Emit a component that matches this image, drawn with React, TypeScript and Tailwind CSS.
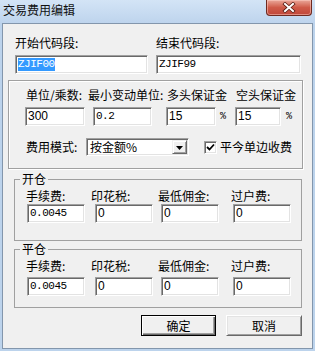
import React from "react";

const cx = (...classes: Array<string | false | null | undefined>) =>
  classes.filter(Boolean).join(" ");

// classic sunken edit box
const Field = ({
  value,
  className,
  mono,
  selected,
}: {
  value: string;
  className: string;
  mono?: boolean;
  selected?: boolean;
}) => (
  <div
    className={cx(
      "flex h-[19px] shrink-0 items-center border border-t-[#a0a0a0] border-l-[#a0a0a0] border-b-white border-r-white bg-white pl-[2px] shadow-[inset_1px_1px_0_#696969,inset_-1px_-1px_0_#e3e3e3]",
      className,
    )}
  >
    {mono ? (
      <span
        className={cx(
          "font-['Liberation_Mono',monospace] text-[11px] leading-[13px] tracking-[-0.5px]",
          selected && "bg-[#3399ff] text-white",
        )}
      >
        {value}
      </span>
    ) : (
      <span className="font-['Liberation_Sans',sans-serif] text-[12px] leading-[13px]">
        {value}
      </span>
    )}
  </div>
);

const Percent = ({ className }: { className: string }) => (
  <span
    className={cx(
      "font-['Liberation_Mono',monospace] text-[10px] leading-[16px]",
      className,
    )}
  >
    %
  </span>
);

const FeeGroup = ({
  title,
  className,
  values,
}: {
  title: string;
  className: string;
  values: Array<{ v: string; mono?: boolean }>;
}) => (
  <fieldset
    className={cx(
      "ml-[11px] w-[288px] shrink-0 border border-[#a0a0a0]",
      className,
    )}
  >
    <legend className="ml-[5px] px-[2px] leading-[16px]">{title}</legend>
    <div className="mt-[1px] flex pl-[11px] leading-[16px]">
      <span className="w-[65px]">手续费:</span>
      <span className="w-[67px]">印花税:</span>
      <span className="w-[73px]">最低佣金:</span>
      <span>过户费:</span>
    </div>
    <div className={cx("flex items-center pl-[12px]", title === "平仓" ? "mt-[3px]" : "mt-0")}>
      <Field value={values[0].v} mono={values[0].mono} className="w-[58px]" />
      <Field value={values[1].v} mono={values[1].mono} className="ml-[10px] w-[58px]" />
      <Field value={values[2].v} mono={values[2].mono} className="ml-[8px] w-[58px]" />
      <Field value={values[3].v} mono={values[3].mono} className="ml-[14px] w-[58px]" />
    </div>
  </fieldset>
);

export default function App() {
  return (
    <div className="flex h-[351px] w-[315px] flex-col overflow-hidden bg-[#bcd3ec] font-['Noto_Sans_CJK_SC',sans-serif] text-[12px] leading-[16px] text-black">
      {/* title bar */}
      <div className="flex h-[23px] shrink-0 items-start bg-gradient-to-b from-[#d3e4f6] to-[#bed4ed]">
        <span className="pl-[3px] pt-[2px] text-[12px] leading-[16px] text-[#111]">
          交易费用编辑
        </span>
        <div className="ml-auto mr-[3px] flex h-[16px] w-[46px] items-center justify-center rounded-b-[4px] border border-t-0 border-[#6e2a20] bg-gradient-to-b from-[#e9a79a] via-[#cf5a48] to-[#c0473a] shadow-[inset_0_0_0_1px_rgba(255,210,200,0.5)]">
          <svg width="14" height="11" viewBox="0 0 14 11">
            <path d="M3 2 L11 9 M11 2 L3 9" stroke="#5a1c12" strokeWidth="3.6" strokeLinecap="square" />
            <path d="M3 2 L11 9 M11 2 L3 9" stroke="#fff" strokeWidth="2" strokeLinecap="square" />
          </svg>
        </div>
      </div>

      {/* client area */}
      <div className="mx-[2px] flex h-[326px] shrink-0 flex-col border border-[#8396ac] bg-[#f0f0f0]">
        <div className="mt-[11px] flex pl-[12px]">
          <span className="w-[141px]">开始代码段:</span>
          <span>结束代码段:</span>
        </div>
        <div className="mt-[4px] flex pl-[12px]">
          <Field value="ZJIF00" mono selected className="w-[133px]" />
          <Field value="ZJIF99" mono className="ml-[8px] w-[145px]" />
        </div>

        {/* unit / margin group */}
        <div className="ml-[5px] mt-[6px] flex h-[89px] w-[295px] shrink-0 flex-col border border-[#a0a0a0] shadow-[1px_1px_0_#fff,inset_1px_1px_0_#fff]">
          <div className="mt-[6px] flex pl-[17px]">
            <span className="w-[62px]">单位/乘数:</span>
            <span className="w-[79px]">最小变动单位:</span>
            <span className="w-[69px]">多头保证金</span>
            <span>空头保证金</span>
          </div>
          <div className="mt-[4px] flex items-center pl-[16px]">
            <Field value="300" className="w-[60px]" />
            <Field value="0.2" mono className="ml-[8px] w-[59px]" />
            <Field value="15" className="ml-[14px] w-[50px]" />
            <Percent className="w-[19px] pl-[4px]" />
            <Field value="15" className="w-[46px]" />
            <Percent className="pl-[5px]" />
          </div>
          <div className="mt-[12px] flex items-center pl-[17px]">
            <span className="w-[60px]">费用模式:</span>
            <div className="flex h-[18px] w-[103px] items-stretch border border-t-[#a0a0a0] border-l-[#a0a0a0] border-b-white border-r-white bg-white shadow-[inset_1px_1px_0_#696969,inset_-1px_-1px_0_#e3e3e3]">
              <span className="flex-1 pl-[3px] leading-[16px]">按金额%</span>
              <div className="my-[1px] mr-[1px] flex w-[15px] items-center justify-center border border-t-[#f0f0f0] border-l-[#f0f0f0] border-b-[#696969] border-r-[#696969] bg-[#f0f0f0] shadow-[inset_1px_1px_0_#fff,inset_-1px_-1px_0_#a0a0a0]">
                <svg width="7" height="4" viewBox="0 0 7 4" className="mt-[2px]">
                  <path d="M0 0 H7 L3.5 4 Z" fill="#000" />
                </svg>
              </div>
            </div>
            <div className="ml-[15px] flex h-[13px] w-[13px] items-center justify-center border border-t-[#a0a0a0] border-l-[#a0a0a0] border-b-white border-r-white bg-white shadow-[inset_1px_1px_0_#696969,inset_-1px_-1px_0_#e3e3e3]">
              <svg width="9" height="9" viewBox="0 0 9 9">
                <path d="M1 4 L3.5 6.5 L8 1.5" stroke="#000" strokeWidth="1.8" fill="none" />
              </svg>
            </div>
            <span className="ml-[3px]">平今单边收费</span>
          </div>
        </div>

        <FeeGroup
          title="开仓"
          className="mt-[2px] h-[70px]"
          values={[{ v: "0.0045", mono: true }, { v: "0" }, { v: "0" }, { v: "0" }]}
        />
        <FeeGroup
          title="平仓"
          className="mt-0 h-[67px]"
          values={[{ v: "0.0045", mono: true }, { v: "0" }, { v: "0" }, { v: "0" }]}
        />

        <div className="mt-[7px] flex justify-end gap-[10px] pr-[10px]">
          <button className="flex h-[21px] w-[75px] items-center justify-center border border-black bg-[#f0f0f0] leading-[16px] shadow-[inset_1px_1px_0_#fff,inset_-1px_-1px_0_#696969,inset_-2px_-2px_0_#a0a0a0]">
            确定
          </button>
          <button className="flex h-[21px] w-[76px] items-center justify-center border border-t-white border-l-white border-b-[#696969] border-r-[#696969] bg-[#f0f0f0] leading-[16px] shadow-[inset_1px_1px_0_#e3e3e3,inset_-1px_-1px_0_#a0a0a0]">
            取消
          </button>
        </div>
      </div>
    </div>
  );
}
